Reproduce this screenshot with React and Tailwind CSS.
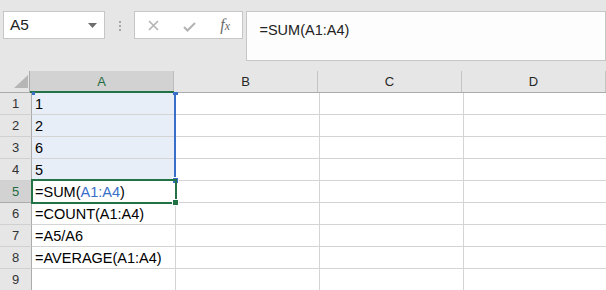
import React from "react";

const cols = ["A", "B", "C", "D"];

const rows = [
  { n: 1, a: "1" },
  { n: 2, a: "2" },
  { n: 3, a: "6" },
  { n: 4, a: "5" },
  { n: 5, a: "sum" },
  { n: 6, a: "=COUNT(A1:A4)" },
  { n: 7, a: "=A5/A6" },
  { n: 8, a: "=AVERAGE(A1:A4)" },
  { n: 9, a: "" },
];

function Toolbar() {
  return (
    <div className="h-[71px] flex items-start pt-[11px]">
      {/* name box */}
      <div className="ml-[3px] w-[103px] h-[28px] bg-white border border-[#c6c6c6] flex items-center justify-between pl-[6px] pr-[7px]">
        <span className="text-[15.5px] text-[#222] leading-none">A5</span>
        <svg width="9" height="5" viewBox="0 0 9 5">
          <polygon points="0,0 9,0 4.5,5" fill="#6d6d6d" />
        </svg>
      </div>
      {/* grip dots */}
      <div className="w-[29px] h-[28px] flex flex-col items-center justify-center gap-[2px] pt-[1px]">
        <div className="w-[2px] h-[2px] bg-[#a6a6a6]" />
        <div className="w-[2px] h-[2px] bg-[#a6a6a6]" />
        <div className="w-[2px] h-[2px] bg-[#a6a6a6]" />
      </div>
      {/* cancel / enter / fx */}
      <div className="w-[110px] h-[28px] bg-white border border-[#c6c6c6] flex items-center">
        <svg className="ml-[13px]" width="11" height="11" viewBox="0 0 11 11">
          <path d="M1 1 L10 10 M10 1 L1 10" stroke="#b3b3b3" strokeWidth="1.6" />
        </svg>
        <svg className="ml-[24px] mt-[3px]" width="13" height="10" viewBox="0 0 13 10">
          <path d="M1 5 L4.5 8.5 L12 1" stroke="#b3b3b3" strokeWidth="2" fill="none" />
        </svg>
        <span className="ml-[24px] text-[#6a6a6a] italic text-[16px] leading-none" style={{ fontFamily: '"Liberation Serif", serif' }}>
          f<span className="text-[12px]">x</span>
        </span>
      </div>
      {/* formula box */}
      <div className="ml-[3px] w-[362px] h-[50px] bg-[#fdfdfd] border border-[#c6c6c6] pl-[12px] pt-[6px]">
        <span className="text-[14.5px] text-[#222] leading-[20px]">=SUM(A1:A4)</span>
      </div>
    </div>
  );
}

function HeaderRow() {
  return (
    <div className="flex h-[22px] border-b border-[#ababab]">
      <div className="w-[32px] h-full border-r border-[#ababab] relative">
        <svg className="absolute left-0 top-0" width="31" height="21" viewBox="0 0 31 21">
          <polygon points="28,4 28,17 14,17" fill="#b6b6b6" />
        </svg>
      </div>
      {cols.map((c) => (
        <div
          key={c}
          className={
            c === "A"
              ? "relative w-[144px] shrink-0 h-full bg-[#d2d2d2] border-r border-[#bdbdbd] flex items-center justify-center text-[13px] text-[#1e6b41]"
              : "relative w-[144px] shrink-0 h-full border-r border-[#c4c4c4] flex items-center justify-center text-[13px] text-[#262626]"
          }
        >
          {c}
          {c === "A" && <div className="absolute left-0 right-[-1px] bottom-[-1px] h-[2px] bg-[#217346]" />}
        </div>
      ))}
    </div>
  );
}

function CellText({ v }) {
  if (v === "sum") {
    return (
      <span>
        =SUM(<span className="text-[#3a6fc9]">A1:A4</span>)
      </span>
    );
  }
  return <span>{v}</span>;
}

export default function App() {
  return (
    <div
      className="w-[606px] h-[290px] overflow-hidden bg-[#e6e6e6]"
      style={{ fontFamily: '"Liberation Sans", Arial, sans-serif' }}
    >
      <Toolbar />
      <HeaderRow />
      <div className="relative">
        {rows.map((r) => (
          <div key={r.n} className="flex h-[22px]">
            <div
              className={
                r.n === 5
                  ? "w-[32px] shrink-0 h-full bg-[#d2d2d2] border-r border-b border-[#ababab] flex items-center justify-center text-[13px] text-[#1e6b41]"
                  : "w-[32px] shrink-0 h-full bg-[#e6e6e6] border-r border-b border-r-[#ababab] border-b-[#d0d0d0] flex items-center justify-center text-[13px] text-[#333]"
              }
            >
              {r.n}
            </div>
            <div
              className={
                r.n <= 4
                  ? "w-[144px] shrink-0 h-full bg-[#e8eef8] border-r border-b border-[#d4d4d4] pl-[3px] pt-[1px] text-[14.5px] leading-[21px] text-black whitespace-nowrap"
                  : "w-[144px] shrink-0 h-full bg-white border-r border-b border-[#d4d4d4] pl-[3px] pt-[1px] text-[14.5px] leading-[21px] text-black whitespace-nowrap"
              }
            >
              <CellText v={r.a} />
            </div>
            {[1, 2, 3].map((i) => (
              <div key={i} className="w-[144px] shrink-0 h-full bg-white border-r border-b border-[#d4d4d4]" />
            ))}
          </div>
        ))}

        {/* reference range A1:A4 */}
        <div className="absolute left-[174px] top-[-1px] w-[2px] h-[87px] bg-[#3a6fc9]" />
        <div className="absolute left-[32px] top-[-1px] w-[3px] h-[3px] bg-[#3a6fc9]" />
        <div className="absolute left-[173px] top-[-1px] w-[5px] h-[3px] bg-[#3a6fc9]" />
        <div className="absolute left-[172px] top-[84px] w-[7px] h-[7px] bg-[#3a6fc9] border border-white" />

        {/* active cell A5 */}
        <div className="absolute left-[31px] top-[86px] w-[146px] h-[25px] border-2 border-[#217346]" />
        <div className="absolute left-[172px] top-[106px] w-[7px] h-[7px] bg-[#217346] border border-white" />
      </div>
    </div>
  );
}
